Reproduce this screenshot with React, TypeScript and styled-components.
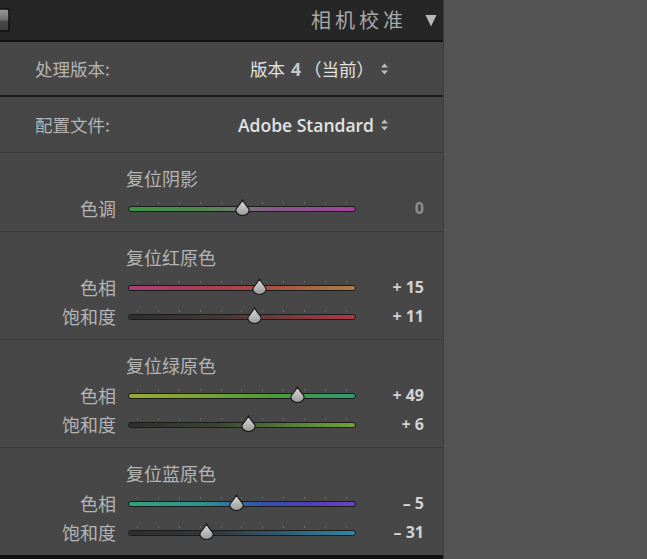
import React from "react";
import styled, { createGlobalStyle } from "styled-components";

const GlobalStyle = createGlobalStyle`
  html, body {
    margin: 0;
    padding: 0;
    background: #545454;
  }
  body {
    font-family: "Noto Sans CJK SC", "Noto Sans", sans-serif;
  }
`;

const Page = styled.div`
  width: 647px;
  height: 559px;
  background: #545454;
  overflow: hidden;
`;

const Panel = styled.div`
  width: 444px;
  height: 559px;
  background: #474747;
  display: flex;
  flex-direction: column;
  border-right: 1px solid #3d3d3d;
  box-sizing: border-box;
`;

const Header = styled.div`
  height: 40px;
  flex: none;
  background: #262626;
  border-bottom: 2px solid #121212;
  display: flex;
  align-items: center;
  padding-right: 4px;
`;

const Title = styled.div`
  margin-left: auto;
  color: #a9a9a9;
  font-size: 20px;
  letter-spacing: 4px;
  line-height: 40px;
`;

const Collapse = styled.svg`
  margin-left: 18px;
  margin-right: 2px;
  flex: none;
`;

const SettingRow = styled.div<{ $h: number; $heavy?: boolean }>`
  height: ${(p) => p.$h}px;
  flex: none;
  display: flex;
  align-items: center;
  padding: 0 54px 0 35px;
  border-bottom: ${(p) => (p.$heavy ? "2px solid #1a1a1a" : "1px solid #3a3a3a")};
`;

const SettingLabel = styled.div`
  color: #b4b4b4;
  font-size: 17.5px;
`;

const SettingValue = styled.div<{ $latin?: boolean }>`
  margin-left: auto;
  display: flex;
  align-items: center;
  gap: 6px;
  color: #e2e2e2;
  font-size: 17.5px;
  font-family: ${(p) =>
    p.$latin ? '"Open Sans", "Noto Sans", sans-serif' : '"Noto Sans CJK SC", sans-serif'};
  font-weight: ${(p) => (p.$latin ? 600 : 400)};
`;

const Num = styled.span`
  font-family: "Open Sans", sans-serif;
  font-weight: 700;
  color: #c9c9c9;
  margin: 0 3px 0 6px;
`;

const Section = styled.div<{ $last?: boolean }>`
  flex: none;
  padding: 13px 0 9px;
  border-bottom: ${(p) => (p.$last ? "4px solid #111" : "1px solid #3a3a3a")};
`;

const SectionTitle = styled.div`
  height: 24px;
  line-height: 24px;
  padding-left: 126px;
  color: #b4b4b4;
  font-size: 18px;
  margin-bottom: 3px;
`;

const SliderRow = styled.div`
  height: 29px;
  display: flex;
  align-items: center;
`;

const SliderLabel = styled.div`
  width: 128px;
  text-align: right;
  color: #b4b4b4;
  font-size: 18px;
  padding-right: 12px;
  box-sizing: border-box;
`;

const TrackWrap = styled.div`
  position: relative;
  width: 228px;
  height: 20px;
  flex: none;
`;

const Track = styled.div<{ $bg: string }>`
  position: absolute;
  left: 0;
  right: 0;
  top: 8px;
  height: 4px;
  border-radius: 4px;
  border: 1px solid #1c1c1c;
  background: ${(p) => p.$bg};
  box-sizing: content-box;
`;

const Ticks = styled.div`
  position: absolute;
  left: 9px;
  right: 9px;
  top: 4px;
  display: flex;
  justify-content: space-between;
`;

const Tick = styled.span`
  width: 1px;
  height: 2px;
  background: #6c6c6c;
`;

const Thumb = styled.svg`
  position: absolute;
  top: 1px;
  margin-left: -8.5px;
`;

const SliderValue = styled.div<{ $zero?: boolean }>`
  width: 68px;
  text-align: right;
  color: ${(p) => (p.$zero ? "#8e8e8e" : "#d2d2d2")};
  font-family: "Open Sans", sans-serif;
  font-weight: 700;
  font-size: 16px;
`;

const UpDown = () => (
  <svg width="9" height="12" viewBox="0 0 9 12">
    <path d="M4.5 0.5 L8 4.5 H1 Z" fill="#bdbdbd" />
    <path d="M4.5 11.5 L8 7.5 H1 Z" fill="#bdbdbd" />
  </svg>
);

type SliderSpec = { label: string; value: number; bg: string };

const fmt = (v: number) => (v === 0 ? "0" : v > 0 ? `+ ${v}` : `– ${Math.abs(v)}`);

const Slider = ({ label, value, bg }: SliderSpec) => {
  const left = 114 + (value / 100) * 114;
  return (
    <SliderRow>
      <SliderLabel>{label}</SliderLabel>
      <TrackWrap>
        <Ticks>
          {Array.from({ length: 11 }).map((_, i) => (
            <Tick key={i} />
          ))}
        </Ticks>
        <Track $bg={bg} />
        <Thumb width="17" height="18" viewBox="0 0 17 18" style={{ left }}>
          <defs>
            <linearGradient id="tg" x1="0" y1="0" x2="0" y2="1">
              <stop offset="0" stopColor="#dcdcdc" />
              <stop offset="1" stopColor="#9a9a9a" />
            </linearGradient>
          </defs>
          <path
            d="M8.5 1 C10 3.8 12.2 6.5 14.3 9 C16.4 12.2 13.8 16.5 8.5 16.5 C3.2 16.5 0.6 12.2 2.7 9 C4.8 6.5 7 3.8 8.5 1 Z"
            fill="url(#tg)"
            stroke="#1e1e1e"
            strokeWidth="1.2"
          />
        </Thumb>
      </TrackWrap>
      <SliderValue $zero={value === 0}>{fmt(value)}</SliderValue>
    </SliderRow>
  );
};

const sections: { title: string; sliders: SliderSpec[] }[] = [
  {
    title: "复位阴影",
    sliders: [
      {
        label: "色调",
        value: 0,
        bg: "linear-gradient(90deg, #3c9440 0%, #528652 35%, #767676 50%, #865a86 65%, #a042a0 100%)",
      },
    ],
  },
  {
    title: "复位红原色",
    sliders: [
      {
        label: "色相",
        value: 15,
        bg: "linear-gradient(90deg, #ac3e7a 0%, #a83e58 30%, #a84842 55%, #a86644 80%, #a8804a 100%)",
      },
      {
        label: "饱和度",
        value: 11,
        bg: "linear-gradient(90deg, #2e2e2e 0%, #443838 40%, #843a3e 75%, #ac3a44 100%)",
      },
    ],
  },
  {
    title: "复位绿原色",
    sliders: [
      {
        label: "色相",
        value: 49,
        bg: "linear-gradient(90deg, #9aa834 0%, #7ca232 30%, #4a9a3c 65%, #2e9a72 100%)",
      },
      {
        label: "饱和度",
        value: 6,
        bg: "linear-gradient(90deg, #2e2e2e 0%, #3c4634 40%, #5a8432 75%, #70a232 100%)",
      },
    ],
  },
  {
    title: "复位蓝原色",
    sliders: [
      {
        label: "色相",
        value: -5,
        bg: "linear-gradient(90deg, #34a07a 0%, #2e948c 30%, #3650aa 60%, #4e40b8 80%, #6a44c0 100%)",
      },
      {
        label: "饱和度",
        value: -31,
        bg: "linear-gradient(90deg, #2e2e2e 0%, #33393e 40%, #2f6682 75%, #2e86a2 100%)",
      },
    ],
  },
];

export default function App() {
  return (
    <>
      <GlobalStyle />
      <Page>
        <Panel>
          <Header>
            <svg width="11" height="24" viewBox="0 0 11 24">
              <defs>
                <linearGradient id="sw" x1="0" y1="0" x2="0" y2="1">
                  <stop offset="0" stopColor="#9a9a9a" />
                  <stop offset="0.5" stopColor="#6e6e6e" />
                  <stop offset="0.55" stopColor="#4a4a4a" />
                  <stop offset="1" stopColor="#3a3a3a" />
                </linearGradient>
              </defs>
              <rect x="-8" y="1" width="17" height="22" rx="2" fill="url(#sw)" stroke="#111" strokeWidth="1.5" />
            </svg>
            <Title>相机校准</Title>
            <Collapse width="12" height="13" viewBox="0 0 12 13">
              <path d="M0.5 1 H11.5 L6 12.5 Z" fill="#b9b9b9" />
            </Collapse>
          </Header>
          <SettingRow $h={53} $heavy>
            <SettingLabel>处理版本:</SettingLabel>
            <SettingValue>
              <span>
                版本<Num>4</Num>（当前）
              </span>
              <UpDown />
            </SettingValue>
          </SettingRow>
          <SettingRow $h={55}>
            <SettingLabel>配置文件:</SettingLabel>
            <SettingValue $latin>
              <span>Adobe Standard</span>
              <UpDown />
            </SettingValue>
          </SettingRow>
          {sections.map((s, i) => (
            <Section key={s.title} $last={i === sections.length - 1}>
              <SectionTitle>{s.title}</SectionTitle>
              {s.sliders.map((sl) => (
                <Slider key={sl.label} {...sl} />
              ))}
            </Section>
          ))}
        </Panel>
      </Page>
    </>
  );
}
